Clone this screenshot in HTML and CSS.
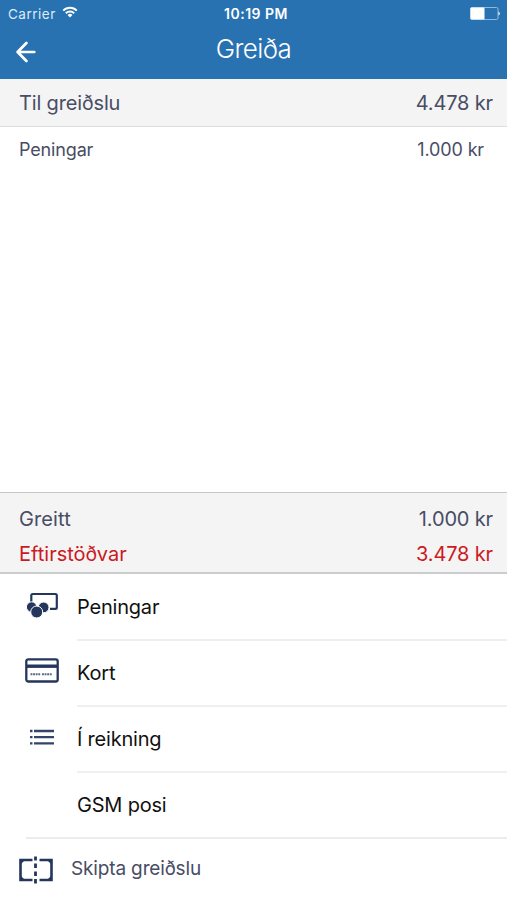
FILE: index.html
```html
<!DOCTYPE html>
<html lang="is">
<head>
  <meta charset="UTF-8" />
  <meta name="viewport" content="width=device-width, initial-scale=1.0"/>
  <title>Greiða</title>
  <link rel="stylesheet" href="styles.css">
</head>
<body>
  <div class="screen">
    <header class="header">
      <div class="status-bar">
        <div class="carrier">
          <span>Carrier</span>
          <svg width="16" height="12" viewBox="0 0 16 12" fill="none" stroke="#fff" stroke-width="1.9">
            <path d="M1.2 4.6a9.6 9.6 0 0 1 13.6 0"/>
            <path d="M3.8 7.2a6 6 0 0 1 8.4 0"/>
            <path d="M8 11.4L5.6 9a3.4 3.4 0 0 1 4.8 0z" fill="#fff" stroke="none"/>
          </svg>
        </div>
        <div class="clock">10:19 PM</div>
        <div class="battery">
          <svg width="31" height="13" viewBox="0 0 31 13">
            <rect x="0.5" y="0.5" width="27.5" height="12" rx="1.5" fill="none" stroke="#8fb8de"/>
            <rect x="0.5" y="0.5" width="14" height="12" rx="1" fill="#fff"/>
            <path d="M28.5 4.5a2.2 2.2 0 0 1 0 4z" fill="#fff"/>
          </svg>
        </div>
      </div>
      <div class="nav">
        <button class="back" aria-label="Til baka">
          <svg width="20" height="22" viewBox="0 0 20 22" fill="none" stroke="#fff" stroke-width="2.7" stroke-linecap="round" stroke-linejoin="round">
            <path d="M18.3 11H1.8M10.4 2L1.6 11l8.8 9"/>
          </svg>
        </button>
        <h1 class="title">Greiða</h1>
      </div>
    </header>

    <div class="row due">
      <span>Til greiðslu</span>
      <span class="amount">4.478 kr</span>
    </div>

    <div class="payments">
      <div class="row payment">
        <span>Peningar</span>
        <span>1.000 kr</span>
      </div>
    </div>

    <div class="totals">
      <div class="row"><span class="paid-label">Greitt</span><span class="amount">1.000 kr</span></div>
      <div class="row remaining"><span class="remaining-label">Eftirstöðvar</span><span class="amount">3.478 kr</span></div>
    </div>

    <div class="menu">
      <div class="item">
        <div class="icon">
          <svg width="34" height="28" viewBox="0 0 34 28">
            <path d="M6.3 10V3.4a1.4 1.4 0 0 1 1.4-1.4h22.7a1.4 1.4 0 0 1 1.4 1.4v12a1.4 1.4 0 0 1-1.4 1.4H25" fill="none" stroke="#25365c" stroke-width="2.2"/>
            <g fill="#25365c" stroke="#fff" stroke-width="1">
              <circle cx="6.6" cy="15" r="5.2"/>
              <circle cx="18.6" cy="15.4" r="5.4"/>
              <circle cx="11.7" cy="20" r="6"/>
            </g>
          </svg>
        </div>
        <div class="label">Peningar</div>
      </div>
      <div class="item">
        <div class="icon">
          <svg width="34" height="28" viewBox="0 0 34 28">
            <rect x="1.3" y="1.3" width="31.4" height="22.2" rx="2" fill="none" stroke="#25365c" stroke-width="2.3"/>
            <path d="M1 8.2h32" stroke="#25365c" stroke-width="3.4"/>
            <path d="M5.5 16.2h9.7M17 16.2h9.7" stroke="#5a6785" stroke-width="2" stroke-dasharray="1.9 0.7"/>
          </svg>
        </div>
        <div class="label">Kort</div>
      </div>
      <div class="item">
        <div class="icon">
          <svg width="34" height="28" viewBox="0 0 34 28" fill="none" stroke="#34446b" stroke-width="2.3">
            <path d="M5 7h2.5M9 7h20M5 13.2h2.5M9 13.2h20M5 19.4h2.5M9 19.4h20"/>
          </svg>
        </div>
        <div class="label">Í reikning</div>
      </div>
      <div class="item last">
        <div class="icon"></div>
        <div class="label">GSM posi</div>
      </div>
    </div>

    <div class="split">
      <svg width="34" height="28" viewBox="0 0 34 28">
        <path d="M13.5 4H1.5v20h12M20.5 4h12v20h-12" fill="none" stroke="#25365c" stroke-width="2.6"/>
        <path d="M2 4h4L2 8zM2 24h4l-4-4zM32 4h-4l4 4zM32 24h-4l4-4z" fill="#25365c"/>
        <path d="M16.5 0.5v4M16.5 7.5v4.5M16.5 15.5V20M16.5 23v4.5" stroke="#25365c" stroke-width="2.8"/>
      </svg>
      <span class="split-label">Skipta greiðslu</span>
    </div>
  </div>
</body>
</html>
```

FILE: styles.css
```css
* {
  box-sizing: border-box;
}

body {
  margin: 0;
  font-family: Inter, "Liberation Sans", sans-serif;
  background: #fff;
  color: #484d65;
}

.screen {
  height: 900px;
  overflow: hidden;
}

.header {
  height: 79px;
  background: #2872b2;
  color: #fff;
}

.status-bar {
  display: grid;
  grid-template-columns: 1fr auto 1fr;
  align-items: center;
  height: 27px;
  padding: 0 6px 0 8px;
  font-size: 13.5px;
}

.carrier {
  display: flex;
  align-items: center;
  gap: 6px;
  color: #deebf8;
  letter-spacing: 0.5px;
}

.carrier svg {
  margin-top: -3px;
}

.clock {
  padding-left: 3px;
  font-size: 14px;
  font-weight: 600;
  letter-spacing: 0.5px;
}

.battery {
  display: flex;
  justify-content: flex-end;
}

.nav {
  display: grid;
  grid-template-columns: 60px 1fr 60px;
  align-items: center;
  height: 42px;
}

.back {
  display: flex;
  margin: 8px 0 0 16px;
  padding: 0;
  border: none;
  background: none;
}

.title {
  margin: 0;
  font-size: 26px;
  font-weight: 300;
  letter-spacing: -0.6px;
  text-align: center;
}

.row {
  display: flex;
  justify-content: space-between;
  align-items: center;
  padding: 0 14px 0 19px;
  font-size: 20px;
  letter-spacing: -0.15px;
}

.due {
  height: 48px;
  background: #f4f4f4;
  border-bottom: 1px solid #dcdedf;
}

.payments {
  height: 365px;
}

.payment {
  height: 45px;
  padding-right: 23px;
  font-size: 18px;
}

.totals {
  height: 82px;
  padding-top: 8px;
  background: #f4f4f4;
  border-top: 1px solid #c6c7c8;
  border-bottom: 2px solid #cbcccd;
}

.totals .row {
  height: 35px;
}

.paid-label {
  letter-spacing: 0.1px;
}

.totals .remaining {
  color: #cb1a22;
}

.remaining-label {
  letter-spacing: 0;
}

.menu {
  padding-top: 1px;
}

.item {
  display: flex;
  height: 66px;
  padding-left: 25px;
}

.icon {
  width: 52px;
  padding-top: 17px;
}

.label {
  flex: 1;
  border-bottom: 2px solid #efefef;
  color: #111;
  font-size: 20px;
  letter-spacing: -0.2px;
  line-height: 64px;
}

.last {
  margin-left: 26px;
  padding-left: 0;
  border-bottom: 2px solid #ececec;
}

.last .icon {
  width: 51px;
}

.last .label {
  border-bottom: none;
}

.split {
  display: flex;
  align-items: center;
  gap: 18px;
  height: 61px;
  padding-left: 19px;
  font-size: 19px;
}

.split-label {
  padding-bottom: 3px;
  letter-spacing: -0.15px;
}
```
